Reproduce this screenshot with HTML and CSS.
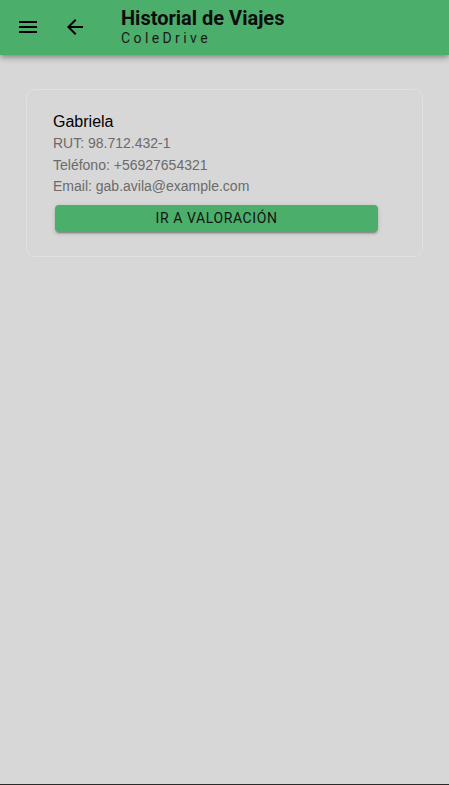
FILE: index.html
```html
<!DOCTYPE html>
<html lang="es">
<head>
<meta charset="utf-8">
<title>Historial de Viajes</title>
<link rel="stylesheet" href="styles.css">
</head>
<body>
<header class="appbar">
  <button class="icon-btn menu" aria-label="Menú">
    <svg width="24" height="24" viewBox="0 0 24 24"><path d="M3 18h18v-2H3v2zm0-5h18v-2H3v2zm0-7v2h18V6H3z"/></svg>
  </button>
  <button class="icon-btn back" aria-label="Volver">
    <svg width="24" height="24" viewBox="0 0 24 24"><path d="M20 11H7.83l5.59-5.59L12 4l-8 8 8 8 1.41-1.41L7.83 13H20v-2z"/></svg>
  </button>
  <div class="titles">
    <div class="title">Historial de Viajes</div>
    <div class="subtitle">ColeDrive</div>
  </div>
</header>
<main class="content">
  <section class="card">
    <div class="name">Gabriela</div>
    <div class="info">RUT: 98.712.432-1</div>
    <div class="info">Teléfono: +56927654321</div>
    <div class="info">Email: gab.avila@example.com</div>
    <button class="action">IR A VALORACIÓN</button>
  </section>
</main>
<div class="bottom-edge"></div>
</body>
</html>
```

FILE: styles.css
```css
html, body {
  margin: 0;
  padding: 0;
}
body {
  background: #d7d7d7;
  font-family: "Liberation Sans", Arial, sans-serif;
  min-height: 100vh;
  display: flex;
  flex-direction: column;
}
.appbar {
  height: 55px;
  background: #4bae6a;
  display: flex;
  align-items: flex-start;
  box-shadow: 0 2px 4px -1px rgba(0,0,0,0.2), 0 4px 5px 0 rgba(0,0,0,0.14), 0 1px 10px 0 rgba(0,0,0,0.12);
  position: relative;
  z-index: 1;
}
.icon-btn {
  border: 0;
  background: none;
  padding: 0;
  width: 24px;
  height: 24px;
  margin-top: 15px;
  display: flex;
}
.icon-btn svg {
  fill: #000;
}
.menu {
  margin-left: 16px;
}
.back {
  margin-left: 23px;
}
.titles {
  margin-left: 34px;
  padding-top: 6px;
  font-family: Roboto, "Liberation Sans", sans-serif;
  color: #0d0d0d;
}
.title {
  font-size: 20px;
  font-weight: 700;
  line-height: 24px;
}
.subtitle {
  font-size: 14px;
  line-height: 16px;
  letter-spacing: 3.4px;
  color: #1a1a1a;
}
.content {
  flex: 1;
  padding: 34px 26px 0;
}
.card {
  border: 1px solid #e1e1e1;
  border-radius: 9px;
  padding: 20px 26px 24px;
}
.name {
  font-size: 16px;
  line-height: 23px;
  color: #000;
}
.info {
  font-size: 14px;
  line-height: 21.5px;
  color: #6b6b6b;
}
.action {
  display: flex;
  align-items: center;
  justify-content: center;
  width: 323px;
  height: 27px;
  margin: 7px 0 0 2px;
  border: 0;
  border-radius: 4px;
  background: #4bae6a;
  color: #141414;
  font-family: Roboto, "Liberation Sans", sans-serif;
  font-size: 14px;
  letter-spacing: 0.6px;
  padding: 0;
  box-shadow: 0 3px 1px -2px rgba(0,0,0,0.2), 0 2px 2px 0 rgba(0,0,0,0.14), 0 1px 5px 0 rgba(0,0,0,0.12);
}
.bottom-edge {
  height: 1px;
  background: #2a2a2a;
}
```
